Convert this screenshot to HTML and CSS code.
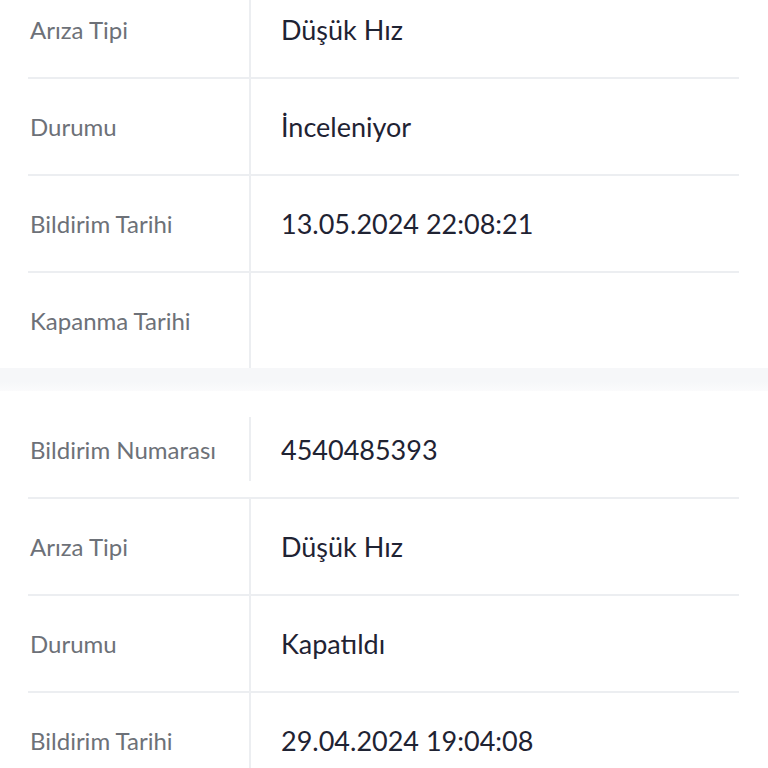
FILE: index.html
```html
<!DOCTYPE html>
<html lang="tr">

<head>
    <meta charset="UTF-8">
    <meta name="viewport" content="width=device-width, initial-scale=1.0">
    <title>Arıza Kayıtları</title>
    <link rel="stylesheet" href="styles.css">
</head>

<body>
    <div class="page">
        <!-- First record (scrolled, top row cut off) -->
        <div class="card first-card">
            <div class="row">
                <div class="label">Bildirim Numarası</div>
                <div class="value">4540485394</div>
            </div>
            <div class="row">
                <div class="label">Arıza Tipi</div>
                <div class="value">Düşük Hız</div>
            </div>
            <div class="row">
                <div class="label">Durumu</div>
                <div class="value">İnceleniyor</div>
            </div>
            <div class="row">
                <div class="label">Bildirim Tarihi</div>
                <div class="value">13.05.2024 22:08:21</div>
            </div>
            <div class="row last">
                <div class="label">Kapanma Tarihi</div>
                <div class="value"></div>
            </div>
        </div>

        <div class="separator"></div>

        <!-- Second record -->
        <div class="card second-card">
            <div class="row top">
                <div class="label">Bildirim Numarası</div>
                <div class="value">4540485393</div>
            </div>
            <div class="row">
                <div class="label">Arıza Tipi</div>
                <div class="value">Düşük Hız</div>
            </div>
            <div class="row">
                <div class="label">Durumu</div>
                <div class="value">Kapatıldı</div>
            </div>
            <div class="row">
                <div class="label">Bildirim Tarihi</div>
                <div class="value">29.04.2024 19:04:08</div>
            </div>
            <div class="row last">
                <div class="label">Kapanma Tarihi</div>
                <div class="value">30.04.2024 10:12:45</div>
            </div>
        </div>
    </div>
</body>

</html>
```

FILE: styles.css
```css
body {
    margin: 0;
    padding: 0;
    background-color: #ffffff;
    font-family: Lato, "Noto Sans", sans-serif;
    overflow: hidden;
}

.page {
    margin-top: -115px;
}

.card {
    background-color: #ffffff;
    padding: 0 29px 0 28px;
}

.row {
    display: flex;
    height: 97px;
    border-bottom: 2px solid #eceef1;
    box-sizing: border-box;
}

.row.last {
    border-bottom: none;
    height: 95px;
}

.label {
    width: 219px;
    flex-shrink: 0;
    display: flex;
    align-items: center;
    padding-left: 2px;
    font-size: 24px;
    color: #6d7178;
}

.value {
    flex: 1;
    display: flex;
    align-items: center;
    padding-left: 30px;
    border-left: 2px solid #eceef1;
    font-size: 27px;
    color: #1f2333;
}

.separator {
    height: 23px;
    background: linear-gradient(#f6f7f9, #f6f7f9 60%, #fbfbfc);
}

.second-card {
    padding-top: 26px;
}

.row.top {
    height: 82px;
    padding-bottom: 16px;
}
```
